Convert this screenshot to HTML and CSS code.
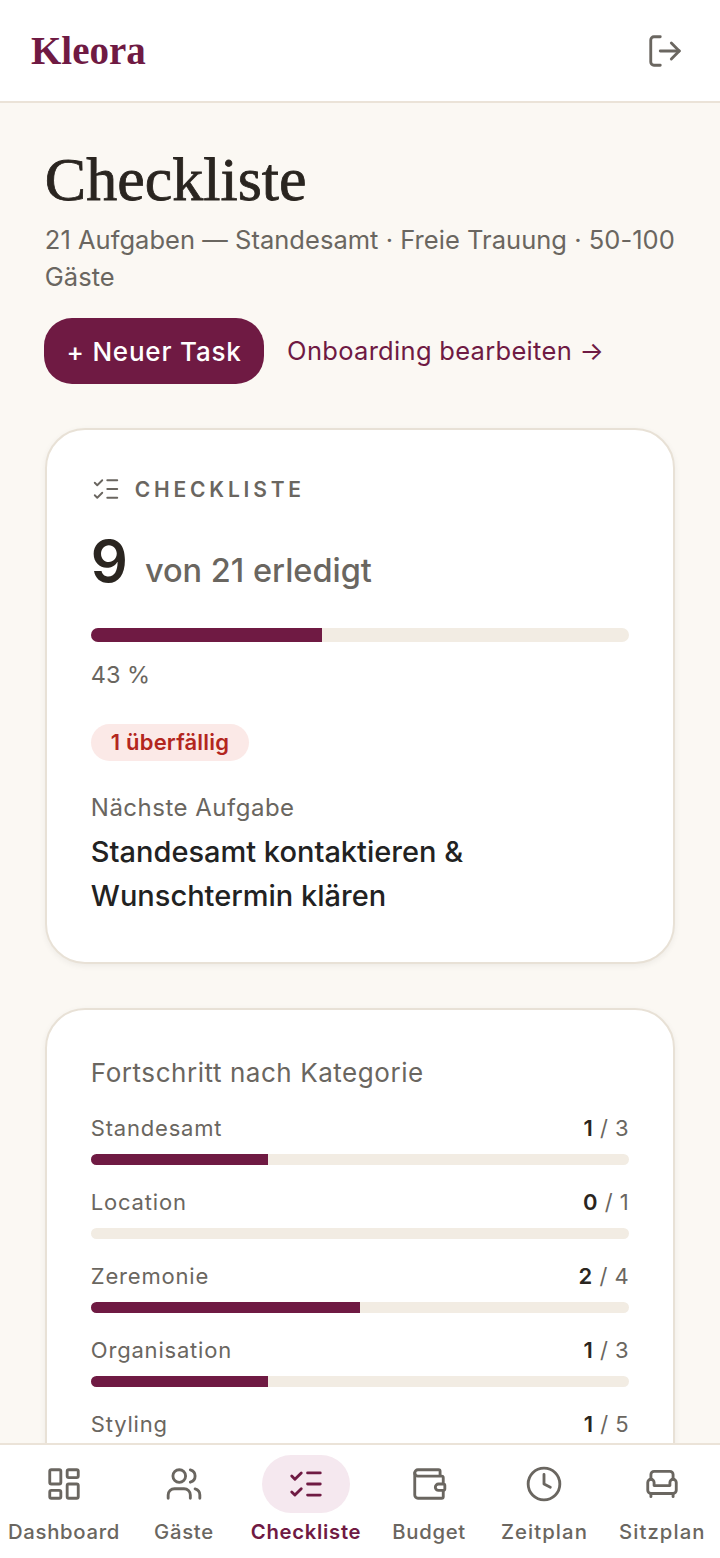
FILE: index.html
```html
<!DOCTYPE html>
<html lang="de">
<head>
  <meta charset="UTF-8" />
  <meta name="viewport" content="width=device-width, initial-scale=1.0"/>
  <title>Kleora Checkliste</title>
  <link rel="stylesheet" href="styles.css">
</head>
<body>
  <div class="app">

    <header class="topbar">
      <span class="logo">Kleora</span>
      <svg class="logout" viewBox="0 0 24 24"><path d="M9 21H5a2 2 0 0 1-2-2V5a2 2 0 0 1 2-2h4"/><path d="M16 17l5-5-5-5"/><path d="M21 12H9"/></svg>
    </header>

    <main class="content">
      <h1>Checkliste</h1>
      <p class="subtitle">21 Aufgaben — Standesamt · Freie Trauung · <span class="nowrap">50-100</span> Gäste</p>
      <div class="actions">
        <button class="btn-new">+ Neuer Task</button>
        <a class="link-onboarding">Onboarding bearbeiten →</a>
      </div>

      <section class="card">
        <div class="eyebrow">
          <svg class="eyebrow-icon" viewBox="0 0 24 24"><path d="M13 5h8"/><path d="M13 12h8"/><path d="M13 19h8"/><path d="M3 17l2 2 4-4"/><path d="M3 7l2 2 4-4"/></svg>
          <span>CHECKLISTE</span>
        </div>
        <div class="count"><strong>9</strong><span>von 21 erledigt</span></div>
        <div class="bar bar-big"><div class="fill" style="width: 43%"></div></div>
        <div class="percent">43 %</div>
        <span class="badge">1 überfällig</span>
        <div class="next-label">Nächste Aufgabe</div>
        <div class="next-task">Standesamt kontaktieren &amp; Wunschtermin klären</div>
      </section>

      <section class="card">
        <h2>Fortschritt nach Kategorie</h2>
        <div class="cat">
          <div class="cat-head"><span>Standesamt</span><span class="cat-num"><b>1</b> / 3</span></div>
          <div class="bar"><div class="fill" style="width: 33%"></div></div>
        </div>
        <div class="cat">
          <div class="cat-head"><span>Location</span><span class="cat-num"><b>0</b> / 1</span></div>
          <div class="bar"><div class="fill" style="width: 0%"></div></div>
        </div>
        <div class="cat">
          <div class="cat-head"><span>Zeremonie</span><span class="cat-num"><b>2</b> / 4</span></div>
          <div class="bar"><div class="fill" style="width: 50%"></div></div>
        </div>
        <div class="cat">
          <div class="cat-head"><span>Organisation</span><span class="cat-num"><b>1</b> / 3</span></div>
          <div class="bar"><div class="fill" style="width: 33%"></div></div>
        </div>
        <div class="cat">
          <div class="cat-head"><span>Styling</span><span class="cat-num"><b>1</b> / 5</span></div>
          <div class="bar"><div class="fill" style="width: 20%"></div></div>
        </div>
      </section>
    </main>

    <nav class="tabs">
      <a class="tab">
        <span class="tab-icon"><svg viewBox="0 0 24 24"><rect x="3" y="3" width="7" height="9" rx="1"/><rect x="14" y="3" width="7" height="5" rx="1"/><rect x="14" y="12" width="7" height="9" rx="1"/><rect x="3" y="16" width="7" height="5" rx="1"/></svg></span>
        Dashboard
      </a>
      <a class="tab">
        <span class="tab-icon"><svg viewBox="0 0 24 24"><path d="M16 21v-2a4 4 0 0 0-4-4H6a4 4 0 0 0-4 4v2"/><circle cx="9" cy="7" r="4"/><path d="M22 21v-2a4 4 0 0 0-3-3.87"/><path d="M16 3.13a4 4 0 0 1 0 7.75"/></svg></span>
        Gäste
      </a>
      <a class="tab tab-active">
        <span class="tab-icon"><svg viewBox="0 0 24 24"><path d="M13 5h8"/><path d="M13 12h8"/><path d="M13 19h8"/><path d="M3 17l2 2 4-4"/><path d="M3 7l2 2 4-4"/></svg></span>
        Checkliste
      </a>
      <a class="tab">
        <span class="tab-icon"><svg viewBox="0 0 24 24"><path d="M19 7V4a1 1 0 0 0-1-1H5a2 2 0 0 0 0 4h15a1 1 0 0 1 1 1v4h-3a2 2 0 0 0 0 4h3a1 1 0 0 0 1-1v-2a1 1 0 0 0-1-1"/><path d="M3 5v14a2 2 0 0 0 2 2h15a1 1 0 0 0 1-1v-4"/></svg></span>
        Budget
      </a>
      <a class="tab tab-wide">
        <span class="tab-icon"><svg viewBox="0 0 24 24"><circle cx="12" cy="12" r="10"/><path d="M12 6v6l4 2"/></svg></span>
        Zeitplan
      </a>
      <a class="tab tab-wide tab-last">
        <span class="tab-icon"><svg viewBox="0 0 24 24"><path d="M19 9V6a2 2 0 0 0-2-2H7a2 2 0 0 0-2 2v3"/><path d="M3 16a2 2 0 0 0 2 2h14a2 2 0 0 0 2-2v-5a2 2 0 0 0-4 0v2H7v-2a2 2 0 0 0-4 0z"/><path d="M5 18v2"/><path d="M19 18v2"/></svg></span>
        Sitzplan
      </a>
    </nav>

  </div>
</body>
</html>
```

FILE: styles.css
```css
* { box-sizing: border-box; }
html, body { margin: 0; height: 100%; }
body { font-family: Inter, "Liberation Sans", sans-serif; background: #fbf8f3; color: #2a2520; }
svg { fill: none; stroke: currentColor; stroke-width: 2; stroke-linecap: round; stroke-linejoin: round; display: block; }

.app { height: 1558px; overflow: hidden; position: relative; }

.topbar { height: 103px; background: #fff; border-bottom: 2px solid #ebe3d8; padding: 0 36px 0 31px; display: flex; align-items: center; justify-content: space-between; }
.logo { font-family: "Liberation Serif", serif; font-size: 39px; font-weight: 700; color: #6f1a43; }
.logout { width: 38px; height: 38px; stroke-width: 1.8; color: #6a6660; }

.content { padding: 42px 44.8px 0; }
h1 { font-family: "Liberation Serif", serif; font-size: 62px; font-weight: 400; line-height: 68px; margin: 0; color: #2a2520; -webkit-text-stroke: 0.8px #2a2520; }
.subtitle { font-size: 25.5px; line-height: 37px; letter-spacing: 0.03px; color: #6a6660; margin: 8px 0 0; }
.nowrap { white-space: nowrap; }
.actions { display: flex; align-items: center; gap: 23px; margin-top: 23px; }
.btn-new { height: 66px; padding: 0 22.5px; border: none; border-radius: 28px; margin-left: -0.8px; background: #6f1a43; color: #fff; font: 500 26px Inter, sans-serif; letter-spacing: 0.8px; }
.link-onboarding { font-size: 25.5px; line-height: 64px; color: #6f1a43; letter-spacing: 0.3px; }

.card { background: #fff; border: 2px solid #e8e1d6; border-radius: 40px; padding: 44px; margin-top: 44px; box-shadow: 0 2px 6px rgba(0,0,0,0.06); }

.eyebrow { display: flex; align-items: center; gap: 14px; font-size: 21px; font-weight: 600; letter-spacing: 3.8px; color: #6a6660; }
.eyebrow-icon { width: 30px; height: 30px; stroke-width: 1.5; }
.count { display: flex; align-items: baseline; gap: 17px; margin-top: 21px; }
.count strong { font-size: 58px; font-weight: 600; line-height: 72px; }
.count span { font-size: 32.5px; font-weight: 500; color: #6a6660; }

.bar { height: 11px; border-radius: 6px; background: #f2ece3; overflow: hidden; }
.bar-big { height: 14px; margin-top: 31px; border-radius: 8px; }
.fill { height: 100%; background: #6f1a43; }
.percent { font-size: 23.5px; color: #6a6660; margin-top: 18px; }

.badge { display: inline-block; margin-top: 35px; padding: 0 20px; height: 37px; line-height: 37px; border-radius: 19px; background: #fbe9e7; color: #b3261e; font-size: 22px; font-weight: 600; letter-spacing: 0.2px; }
.next-label { font-size: 24px; color: #6a6660; margin-top: 32px; letter-spacing: 0.5px; }
.next-task { font-size: 29px; font-weight: 500; line-height: 44px; margin-top: 8px; color: #222; }

h2 { font-size: 26px; font-weight: 400; color: #6a6660; margin: 0 0 21px; line-height: 38px; letter-spacing: 0.55px; }
.cat { margin-bottom: 22px; }
.cat-head { display: flex; justify-content: space-between; font-size: 22px; line-height: 30px; color: #6a6660; letter-spacing: 0.8px; margin-bottom: 11px; }
.cat-num { letter-spacing: 0.5px; }
.cat-num b { font-weight: 600; color: #2a2520; }

.tabs { position: absolute; left: 0; right: 0; bottom: 0; height: 115px; background: #fff; border-top: 2px solid #ebe3d8; display: flex; gap: 34px; padding: 10px 8px 0; }
.tab { display: flex; flex-direction: column; align-items: center; font-size: 20.3px; font-weight: 500; letter-spacing: 0.7px; color: #6a6660; }
.tab-icon { width: 44px; height: 58px; border-radius: 29px; display: flex; align-items: center; justify-content: center; margin-bottom: 6px; }
.tab-icon svg { width: 38px; height: 38px; flex: none; stroke-width: 1.8; }
.tab-active { color: #6f1a43; font-weight: 600; margin: 0 -3px 0 3px; }
.tab-active .tab-icon { width: 88px; background: #f5e8ef; }
.tab-wide { letter-spacing: 1.1px; margin-left: 1px; }
.tab-last { margin-left: -3px; }
```
